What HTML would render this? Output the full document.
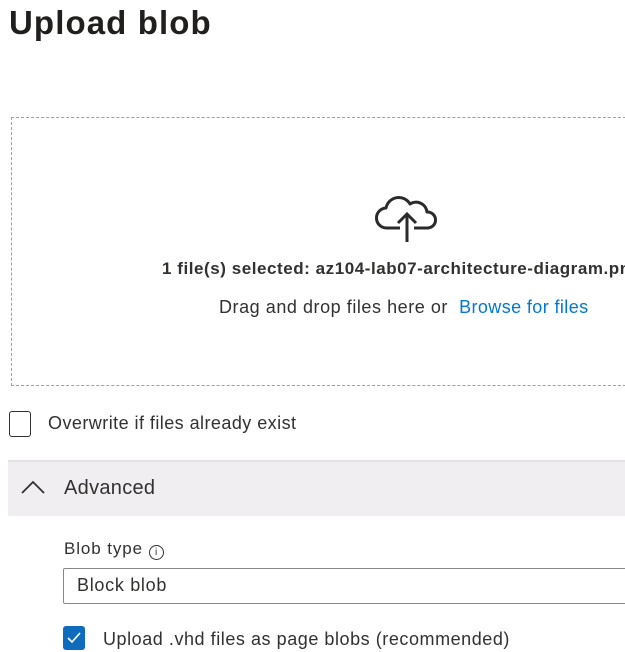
<!DOCTYPE html>
<html><head><meta charset="utf-8"><style>
*{margin:0;padding:0;box-sizing:border-box}
body{width:625px;height:652px;overflow:hidden;background:#fff;font-family:"Liberation Sans",sans-serif;color:#323130;position:relative}
.a{position:absolute;white-space:nowrap}
</style></head><body>
<div class="a" style="left:9px;top:4px;font-size:33px;font-weight:bold;color:#201f1e;letter-spacing:1.1px">Upload blob</div>
<div class="a" style="left:11px;top:117px;width:640px;height:269px;border:1px dashed #a19f9d"></div>
<svg class="a" style="left:374px;top:196px" width="66" height="48" viewBox="0 0 66 48"><path d="M26 32H13a10 10 0 0 1-1-20a13 13 0 0 1 24-4a11 11 0 0 1 17 8a8 8 0 0 1 1 16H40" fill="none" stroke="#2b2b2b" stroke-width="3" stroke-linejoin="round"/><path d="M33 46V19M24 27l9-9l9 9" fill="none" stroke="#2b2b2b" stroke-width="3"/></svg>
<div class="a" style="left:162px;top:259px;font-size:17px;font-weight:bold;color:#323130;letter-spacing:0.55px">1 file(s) selected: az104-lab07-architecture-diagram.png</div>
<div class="a" style="left:219px;top:297px;font-size:18px;color:#323130;letter-spacing:0.55px">Drag and drop files here&nbsp;or&nbsp; <span style="color:#0078d4;letter-spacing:0.4px">Browse for files</span></div>
<div class="a" style="left:9px;top:411px;width:22px;height:26px;border:1.5px solid #323130;border-radius:3px"></div>
<div class="a" style="left:48px;top:413px;font-size:18px;letter-spacing:0.45px">Overwrite if files already exist</div>
<div class="a" style="left:8px;top:460px;width:620px;height:56px;background:#f0eef0;border-top:2px solid #e4e2e4"></div>
<svg class="a" style="left:21px;top:480px" width="24" height="14" viewBox="0 0 24 14"><path d="M1 13L12 2L23 13" fill="none" stroke="#323130" stroke-width="1.8"/></svg>
<div class="a" style="left:64px;top:477px;font-size:20px;letter-spacing:0.3px">Advanced</div>
<div class="a" style="left:64px;top:539px;font-size:17px;letter-spacing:0.9px">Blob type <span style="display:inline-block;width:15px;height:15px;border:1px solid #323130;border-radius:50%;font-size:10px;text-align:center;line-height:13px;vertical-align:-1px;letter-spacing:0">i</span></div>
<div class="a" style="left:63px;top:568px;width:600px;height:36px;border:1px solid #8a8886;border-radius:2px"></div>
<div class="a" style="left:77px;top:575px;font-size:18px;letter-spacing:0.7px">Block blob</div>
<div class="a" style="left:63px;top:626px;width:22px;height:24px;background:#0f6cbd;border-radius:3px"></div>
<svg class="a" style="left:66px;top:630px" width="16" height="16" viewBox="0 0 16 16"><path d="M2 8l4 4l8-9" fill="none" stroke="#fff" stroke-width="1.6"/></svg>
<div class="a" style="left:103px;top:629px;font-size:18px;letter-spacing:0.55px">Upload .vhd files as page blobs (recommended)</div>
</body></html>
